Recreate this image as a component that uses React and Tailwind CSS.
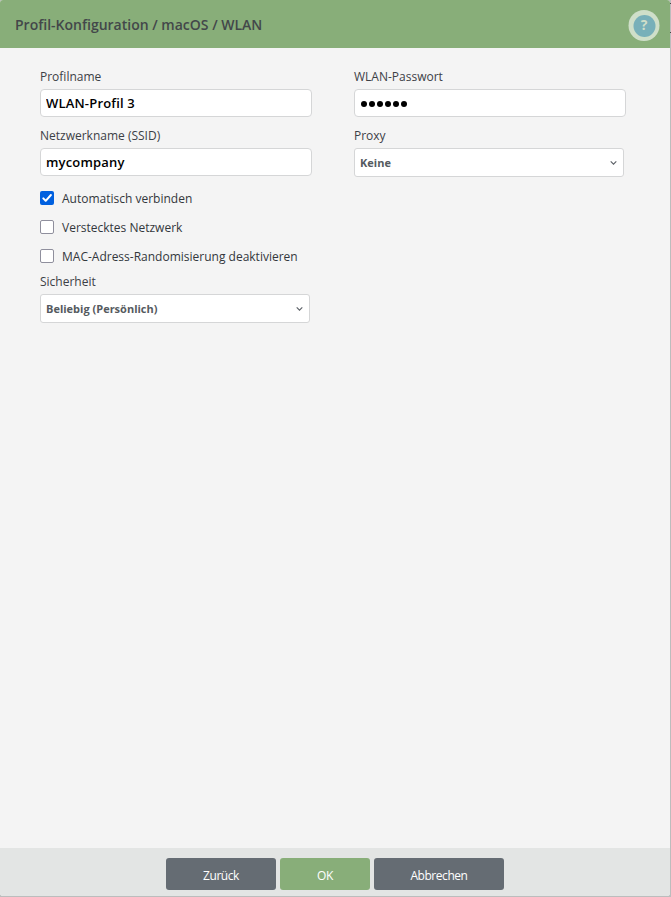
import React from 'react'

function Chevron() {
  return (
    <svg className="h-[5px] w-[7px] shrink-0" viewBox="0 0 7 5" fill="none" stroke="#5b6066" strokeWidth="1.1">
      <path d="M0.7 1.3 L3.5 4.1 L6.3 1.3" />
    </svg>
  )
}

function Label({ children }) {
  return <div className="h-[18px] text-[12px] leading-[18px] whitespace-nowrap text-[#3c4046]">{children}</div>
}

function Field({ label, value }) {
  return (
    <div className="h-[59px]">
      <Label>{label}</Label>
      <input
        type="text"
        defaultValue={value}
        className="mt-[3px] block h-7 w-[272px] rounded border border-[#d5d6d7] bg-white px-[5px] text-[13px] font-semibold tracking-[0.18px] text-black outline-none"
      />
    </div>
  )
}

function PasswordField({ label, length }) {
  return (
    <div className="h-[59px]">
      <Label>{label}</Label>
      <div className="mt-[3px] flex h-7 w-[272px] items-center gap-[2px] rounded border border-[#d5d6d7] bg-white pt-[2px] pl-[6px]">
        {Array.from({ length }, (_, i) => (
          <span key={i} className="h-1.5 w-1.5 rounded-full bg-black" />
        ))}
      </div>
    </div>
  )
}

function Select({ label, value }) {
  return (
    <div>
      <Label>{label}</Label>
      <div className="mt-[3px] flex h-[29px] w-[270px] items-center justify-between rounded-[3px] border border-[#d5d6d7] bg-white pr-[6px] pl-[5px] text-[11px] font-bold text-[#555a60]">
        <span className="pt-[2px]">{value}</span>
        <Chevron />
      </div>
    </div>
  )
}

function Checkbox({ label, checked }) {
  return (
    <label className="flex h-[29px] items-center text-[12px] whitespace-nowrap text-[#33373c]">
      {checked ? (
        <span className="mr-2 flex h-3.5 w-3.5 items-center justify-center rounded-[2px] bg-[#0060df]">
          <svg className="h-3.5 w-3.5" viewBox="0 0 14 14" fill="none" stroke="#fff" strokeWidth="2" strokeLinecap="round" strokeLinejoin="round">
            <path d="M3.3 7.4 L5.7 9.8 L10.9 4" />
          </svg>
        </span>
      ) : (
        <span className="mr-2 h-3.5 w-3.5 rounded-[2px] border border-[#8f8f9d] bg-white" />
      )}
      <span className="pt-[2px]">{label}</span>
    </label>
  )
}

function App() {
  return (
    <div className="relative h-[897px] w-[671px] bg-[#bcbdbd] pr-px pb-px font-['Open_Sans',sans-serif]">
      {/* edges of the window behind the dialog */}
      <span className="absolute top-[3px] right-0 h-px w-px bg-[#444]" />
      <span className="absolute top-8 right-0 h-px w-px bg-[#444]" />
      <div className="flex h-full flex-col overflow-hidden rounded-[3px] bg-[#f4f4f4]">
        <header className="flex h-12 shrink-0 items-center justify-between bg-[#88ae79] pr-[11px] pl-[15px]">
          <h1 className="text-[14px] font-semibold text-[#43474a]">Profil-Konfiguration / macOS / WLAN</h1>
          <div className="mt-[3px] flex h-[31px] w-[31px] translate-x-[0.5px] items-center justify-center rounded-full bg-[#cfdfc9]">
            <span className="flex h-[22px] w-[22px] items-center justify-center rounded-full bg-[#78b0b9] pb-[2px] text-[14px] leading-none font-bold text-[#cfdfc9]">
              ?
            </span>
          </div>
        </header>

        <main className="flex flex-1 gap-[42px] pt-5 pl-10">
          <div className="w-[272px]">
            <Field label="Profilname" value="WLAN-Profil 3" />
            <Field label="Netzwerkname (SSID)" value="mycompany" />
            <div className="-mt-[3px]">
              <Checkbox label="Automatisch verbinden" checked />
              <Checkbox label="Verstecktes Netzwerk" />
              <Checkbox label="MAC-Adress-Randomisierung deaktivieren" />
            </div>
            <div className="mt-[3px]">
              <Select label="Sicherheit" value="Beliebig (Persönlich)" />
            </div>
          </div>
          <div className="w-[272px]">
            <PasswordField label="WLAN-Passwort" length={6} />
            <Select label="Proxy" value="Keine" />
          </div>
        </main>

        <footer className="flex h-12 shrink-0 justify-center gap-1 bg-[#e3e5e4] pt-[10px] text-[12px] tracking-[-0.45px] text-white">
          <button className="h-8 w-[110px] rounded-[3px] bg-[#656c73] pt-[3px]">Zurück</button>
          <button className="h-8 w-[90px] rounded-[3px] bg-[#88ae79] pt-[3px]">OK</button>
          <button className="h-8 w-[130px] rounded-[3px] bg-[#656c73] pt-[3px]">Abbrechen</button>
        </footer>
      </div>
    </div>
  )
}

export default App
